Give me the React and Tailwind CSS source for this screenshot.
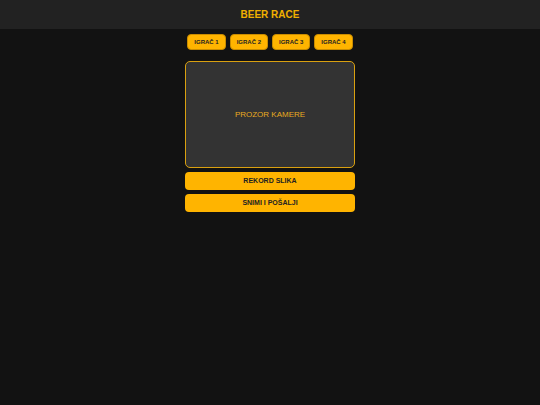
import React from 'react';

const PLAYERS = ['IGRAČ 1', 'IGRAČ 2', 'IGRAČ 3', 'IGRAČ 4'];

export default function App() {
  return (
    <div className="min-h-[405px] w-full bg-[#121212]" style={{ fontFamily: '"Liberation Sans", Arial, sans-serif' }}>
      {/* Header */}
      <header className="h-[29px] bg-[#222222] flex items-center justify-center">
        <h1 className="text-[10px] font-bold text-[#f0b000]">BEER RACE</h1>
      </header>

      <main className="flex flex-col items-center pt-[5px]">
        {/* Player tabs */}
        <div className="flex gap-[4px]">
          {PLAYERS.map((p) => (
            <button
              key={p}
              className="h-[16px] px-[6px] rounded-[4px] bg-[#ffb400] text-[#222] text-[6px] font-bold flex items-center border border-[#c98c00]"
            >
              {p}
            </button>
          ))}
        </div>

        {/* Camera window */}
        <div className="w-[170px] mt-[11px] flex flex-col gap-[4px]">
          <div className="h-[107px] rounded-[5px] border border-[#d9a010] bg-[#333333] flex items-center justify-center">
            <span className="text-[8px] text-[#e8aa20]">PROZOR KAMERE</span>
          </div>
          <button className="h-[18px] rounded-[4px] bg-[#ffb400] text-[#222] text-[7px] font-bold flex items-center justify-center">
            REKORD SLIKA
          </button>
          <button className="h-[18px] rounded-[4px] bg-[#ffb400] text-[#222] text-[7px] font-bold flex items-center justify-center">
            SNIMI I POŠALJI
          </button>
        </div>
      </main>
    </div>
  );
}
